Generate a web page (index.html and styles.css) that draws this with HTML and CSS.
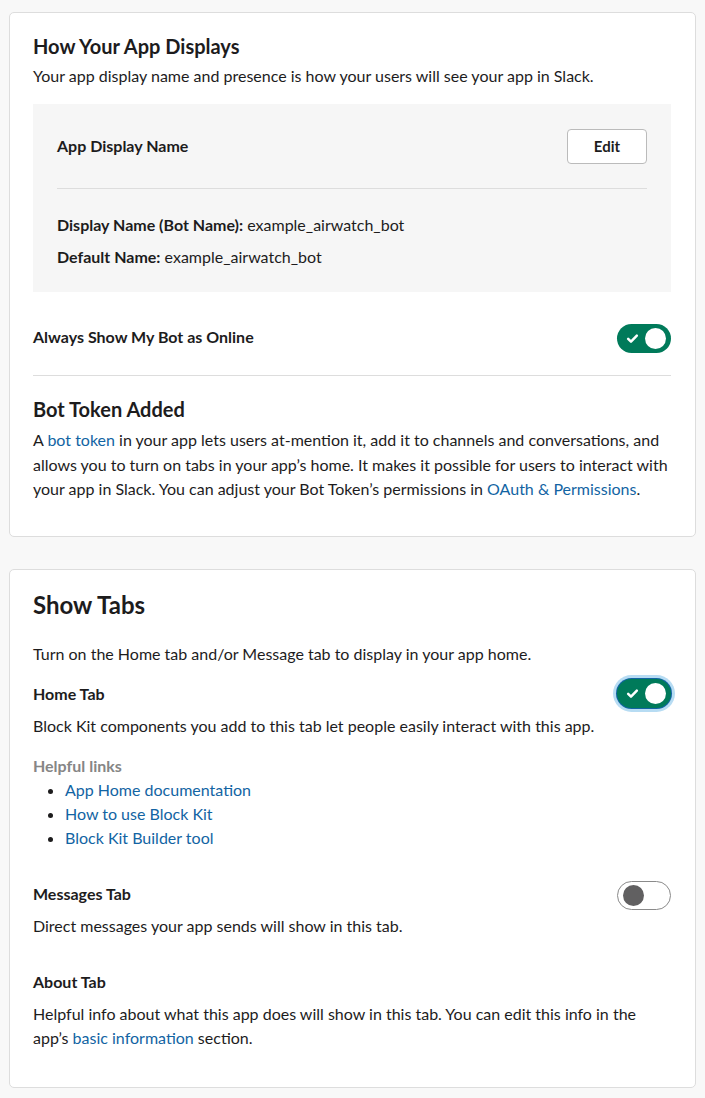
FILE: index.html
```html
<!DOCTYPE html>
<html lang="en">
<head>
<meta charset="utf-8">
<title>App Home</title>
<link rel="stylesheet" href="styles.css">
</head>
<body>
<div class="page">
  <section class="card card-display">
    <h2 class="title">How Your App Displays</h2>
    <p class="text sub">Your app display name and presence is how your users will see your app in Slack.</p>
    <div class="panel">
      <div class="panel-head">
        <span class="label">App Display Name</span>
        <button class="btn">Edit</button>
      </div>
      <div class="panel-rule"></div>
      <p class="text kv"><b>Display Name (Bot Name):</b> example_airwatch_bot</p>
      <p class="text kv kv-2"><b>Default Name:</b> example_airwatch_bot</p>
    </div>
    <div class="row row-online">
      <span class="label">Always Show My Bot as Online</span>
      <span class="toggle on nudge"><svg class="check" viewBox="0 0 12 12" width="13" height="13"><path d="M2 6.4l2.6 2.5L10 3.3" fill="none" stroke="#fff" stroke-width="2.3" stroke-linecap="round" stroke-linejoin="round"/></svg><span class="knob"></span></span>
    </div>
    <div class="rule"></div>
    <h2 class="title token-title">Bot Token Added</h2>
    <p class="text para">A <a href="#">bot token</a> in your app lets users at-mention it, add it to channels and conversations, and allows you to turn on tabs in your app’s home. It makes it possible for users to interact with your app in Slack. You can adjust your Bot Token’s permissions in <a href="#">OAuth &amp; Permissions</a>.</p>
  </section>

  <section class="card card-tabs">
    <h2 class="big-title">Show Tabs</h2>
    <p class="text intro">Turn on the Home tab and/or Message tab to display in your app home.</p>
    <div class="row row-home">
      <span class="label">Home Tab</span>
      <span class="toggle on focus"><svg class="check" viewBox="0 0 12 12" width="13" height="13"><path d="M2 6.4l2.6 2.5L10 3.3" fill="none" stroke="#fff" stroke-width="2.3" stroke-linecap="round" stroke-linejoin="round"/></svg><span class="knob"></span></span>
    </div>
    <p class="text desc">Block Kit components you add to this tab let people easily interact with this app.</p>
    <p class="text helpful">Helpful links</p>
    <ul class="links">
      <li><a href="#">App Home documentation</a></li>
      <li><a href="#">How to use Block Kit</a></li>
      <li><a href="#">Block Kit Builder tool</a></li>
    </ul>
    <div class="row row-messages">
      <span class="label">Messages Tab</span>
      <span class="toggle off nudge"><span class="knob"></span></span>
    </div>
    <p class="text desc">Direct messages your app sends will show in this tab.</p>
    <p class="text label about">About Tab</p>
    <p class="text para about-para">Helpful info about what this app does will show in this tab. You can edit this info in the app’s <a href="#">basic information</a> section.</p>
  </section>
</div>
</body>
</html>
```

FILE: styles.css
```css
html, body {
  margin: 0;
  padding: 0;
  background: #f8f8f8;
}
body {
  font-family: Lato, "Noto Sans", "Liberation Sans", sans-serif;
  color: #1d1c1d;
  font-size: 16px;
}
.page {
  padding: 12px 9px 12px 9px;
  display: flex;
  flex-direction: column;
  gap: 32px;
}
.card {
  background: #fff;
  border: 1px solid #dddddd;
  border-radius: 5px;
  padding: 19px 24px 34px 23px;
}
.card-tabs {
  padding-top: 19px;
  padding-bottom: 36px;
}
p { margin: 0; }
.text {
  font-size: 16px;
  line-height: 24px;
}
a {
  color: #1264a3;
  text-decoration: none;
}
.title {
  margin: 0;
  font-size: 20px;
  line-height: 28px;
  font-weight: 700;
}
.big-title {
  margin: 0;
  font-size: 24px;
  line-height: 32px;
  font-weight: 700;
}
.sub { margin-top: 4px; }
.panel {
  margin-top: 16px;
  background: #f6f6f6;
  padding: 24px 24px 23px 24px;
}
.panel-head {
  display: flex;
  align-items: center;
  justify-content: space-between;
  height: 36px;
}
.label {
  font-weight: 700;
  font-size: 16px;
  line-height: 24px;
}
.btn {
  font-family: inherit;
  font-size: 15px;
  font-weight: 700;
  color: #1d1c1d;
  background: #fff;
  border: 1px solid #bbbbbb;
  border-radius: 4px;
  width: 80px;
  height: 35px;
  padding: 0;
}
.panel-rule {
  height: 1px;
  background: #dddddd;
  margin-top: 24px;
}
.kv { margin-top: 24px; }
.kv-2 { margin-top: 8px; }
.kv b { font-weight: 700; }
.row {
  display: flex;
  align-items: center;
  justify-content: space-between;
  height: 30px;
}
.row-online { margin-top: 30px; }
.nudge { margin-top: 3px; }
.rule {
  height: 1px;
  background: #dddddd;
  margin-top: 23px;
}
.token-title { margin-top: 19px; }
.para {
  margin-top: 5px;
  line-height: 24.5px;
}
.toggle {
  position: relative;
  display: inline-flex;
  align-items: center;
  box-sizing: border-box;
  width: 54px;
  height: 29px;
  border-radius: 15px;
}
.toggle.on {
  background: #007a5a;
}
.toggle.on .check {
  position: absolute;
  left: 9px;
  top: 8px;
}
.toggle.on .knob {
  position: absolute;
  right: 5px;
  top: 4px;
  width: 21px;
  height: 21px;
  border-radius: 50%;
  background: #fff;
}
.toggle.focus {
  box-shadow: 0 0 0 1px #1264a3, 0 0 0 4px #b7dcf3;
}
.toggle.off {
  background: #fff;
  border: 1px solid #8a8a8a;
}
.toggle.off .knob {
  position: absolute;
  left: 5px;
  top: 3px;
  width: 21px;
  height: 21px;
  border-radius: 50%;
  background: #616061;
}
.intro { margin-top: 21px; }
.row-home { margin-top: 13px; }
.desc { margin-top: 5px; }
.helpful {
  margin-top: 16px;
  font-weight: 700;
  color: #868686;
}
.links {
  margin: 0;
  padding-left: 32px;
  font-size: 16px;
  line-height: 24px;
}
.row-messages { margin-top: 29px; }
.about { margin-top: 32px; display: block; }
.about-para { margin-top: 8px; }
```
